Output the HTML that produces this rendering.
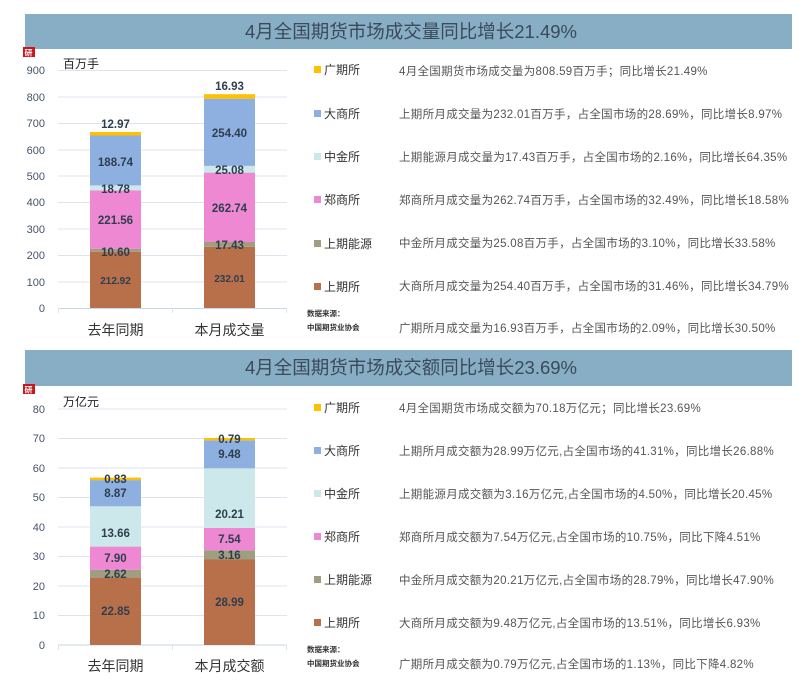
<!DOCTYPE html>
<html><head><meta charset="utf-8"><style>
body{margin:0;background:#fff;width:811px;height:681px;overflow:hidden}
svg text{font-family:"Liberation Sans","Noto Sans CJK SC",sans-serif}
.ax{font-size:11px;fill:#44546a}
.lb{font-size:11.5px;font-weight:bold;fill:#2f3e4e;text-anchor:middle}
.lg{font-size:12px;fill:#333}
.ds{font-size:11.5px;fill:#555;letter-spacing:0.3px}
.src{font-size:7.5px;fill:#333;font-weight:bold}
.t{font-size:18.5px;fill:#3b4a5a;text-anchor:middle}
.xl{font-size:14px;fill:#333;text-anchor:middle}
.un{font-size:12px;fill:#222}
</style></head><body>
<svg width="811" height="681" xmlns="http://www.w3.org/2000/svg">
<rect x="25" y="14" width="767" height="35" fill="#88aec6"/>
<text class="t" x="411" y="38">4月全国期货市场成交量同比增长21.49%</text>
<rect x="23" y="47" width="12" height="10" fill="#c8161d"/><text x="24.5" y="55.5" style="font-size:8px;fill:#fff;font-weight:bold">研</text>
<text class="un" x="63" y="68">百万手</text>
<g stroke="#dce4f0" stroke-width="1">
<line x1="58" x2="287" y1="70.5" y2="70.5"/><line x1="58" x2="287" y1="97" y2="97"/><line x1="58" x2="287" y1="123.5" y2="123.5"/><line x1="58" x2="287" y1="150" y2="150"/><line x1="58" x2="287" y1="176" y2="176"/><line x1="58" x2="287" y1="202.5" y2="202.5"/><line x1="58" x2="287" y1="229" y2="229"/><line x1="58" x2="287" y1="255.5" y2="255.5"/><line x1="58" x2="287" y1="282" y2="282"/>
<line x1="58" x2="287" y1="308.5" y2="308.5" stroke="#c9d6ea"/>
<line x1="58.5" x2="58.5" y1="308" y2="313"/><line x1="172.5" x2="172.5" y1="308" y2="313"/><line x1="286.5" x2="286.5" y1="308" y2="313"/>
</g>
<g class="ax" text-anchor="end">
<text x="45" y="74">900</text><text x="45" y="101">800</text><text x="45" y="127">700</text><text x="45" y="154">600</text><text x="45" y="180">500</text><text x="45" y="206">400</text><text x="45" y="233">300</text><text x="45" y="259">200</text><text x="45" y="286">100</text><text x="45" y="312">0</text>
</g>
<rect x="90" y="251.7" width="51" height="56.3" fill="#b8704b"/>
<rect x="90" y="248.9" width="51" height="2.8" fill="#a09e80"/>
<rect x="90" y="190.3" width="51" height="58.6" fill="#ee88d2"/>
<rect x="90" y="185.4" width="51" height="4.9" fill="#cce8ea"/>
<rect x="90" y="135.5" width="51" height="49.9" fill="#8db0e0"/>
<rect x="90" y="132" width="51" height="3.5" fill="#ffc000"/>
<text class="lb" x="115.5" y="284" style="font-size:10px">212.92</text>
<text class="lb" x="115.5" y="256">10.60</text>
<text class="lb" x="115.5" y="224">221.56</text>
<text class="lb" x="115.5" y="193">18.78</text>
<text class="lb" x="115.5" y="166">188.74</text>
<text class="lb" x="115.5" y="128">12.97</text>
<rect x="204" y="246.7" width="51" height="61.3" fill="#b8704b"/>
<rect x="204" y="242" width="51" height="4.7" fill="#a09e80"/>
<rect x="204" y="172.6" width="51" height="69.4" fill="#ee88d2"/>
<rect x="204" y="165.9" width="51" height="6.7" fill="#cce8ea"/>
<rect x="204" y="98.7" width="51" height="67.2" fill="#8db0e0"/>
<rect x="204" y="94.2" width="51" height="4.5" fill="#ffc000"/>
<text class="lb" x="229.5" y="282" style="font-size:10px">232.01</text>
<text class="lb" x="229.5" y="249">17.43</text>
<text class="lb" x="229.5" y="212">262.74</text>
<text class="lb" x="229.5" y="174">25.08</text>
<text class="lb" x="229.5" y="137">254.40</text>
<text class="lb" x="229.5" y="90">16.93</text>
<text class="xl" x="115.5" y="335">去年同期</text><text class="xl" x="229.5" y="335">本月成交量</text>
<rect x="314" y="66" width="7" height="7" fill="#ffc000"/><text class="lg" x="324" y="74">广期所</text>
<rect x="314" y="110" width="7" height="7" fill="#8db0e0"/><text class="lg" x="324" y="118">大商所</text>
<rect x="314" y="153" width="7" height="7" fill="#cce8ea"/><text class="lg" x="324" y="161">中金所</text>
<rect x="314" y="196" width="7" height="7" fill="#ee88d2"/><text class="lg" x="324" y="204">郑商所</text>
<rect x="314" y="240" width="7" height="7" fill="#a09e80"/><text class="lg" x="324" y="248">上期能源</text>
<rect x="314" y="283" width="7" height="7" fill="#b8704b"/><text class="lg" x="324" y="291">上期所</text>
<text class="src" x="307" y="316">数据来源：</text><text class="src" x="307" y="330">中国期货业协会</text>
<text class="ds" x="399" y="75">4月全国期货市场成交量为808.59百万手；同比增长21.49%</text>
<text class="ds" x="399" y="118">上期所月成交量为232.01百万手，占全国市场的28.69%，同比增长8.97%</text>
<text class="ds" x="399" y="161">上期能源月成交量为17.43百万手，占全国市场的2.16%，同比增长64.35%</text>
<text class="ds" x="399" y="204">郑商所月成交量为262.74百万手，占全国市场的32.49%，同比增长18.58%</text>
<text class="ds" x="399" y="247">中金所月成交量为25.08百万手，占全国市场的3.10%，同比增长33.58%</text>
<text class="ds" x="399" y="290">大商所月成交量为254.40百万手，占全国市场的31.46%，同比增长34.79%</text>
<text class="ds" x="399" y="332">广期所月成交量为16.93百万手，占全国市场的2.09%，同比增长30.50%</text>

<rect x="25" y="350" width="767" height="36" fill="#88aec6"/>
<text class="t" x="411" y="374">4月全国期货市场成交额同比增长23.69%</text>
<rect x="23" y="384" width="12" height="10" fill="#c8161d"/><text x="24.5" y="392.5" style="font-size:8px;fill:#fff;font-weight:bold">研</text>
<text class="un" x="63" y="406">万亿元</text>
<g stroke="#dce4f0" stroke-width="1">
<line x1="58" x2="287" y1="409" y2="409"/><line x1="58" x2="287" y1="438.5" y2="438.5"/><line x1="58" x2="287" y1="468" y2="468"/><line x1="58" x2="287" y1="497.5" y2="497.5"/><line x1="58" x2="287" y1="527" y2="527"/><line x1="58" x2="287" y1="556.5" y2="556.5"/><line x1="58" x2="287" y1="586" y2="586"/><line x1="58" x2="287" y1="615.5" y2="615.5"/>
<line x1="58" x2="287" y1="645" y2="645" stroke="#c9d6ea"/>
<line x1="58.5" x2="58.5" y1="645" y2="650"/><line x1="172.5" x2="172.5" y1="645" y2="650"/><line x1="286.5" x2="286.5" y1="645" y2="650"/>
</g>
<g class="ax" text-anchor="end">
<text x="45" y="413">80</text><text x="45" y="442">70</text><text x="45" y="472">60</text><text x="45" y="501">50</text><text x="45" y="531">40</text><text x="45" y="560">30</text><text x="45" y="590">20</text><text x="45" y="619">10</text><text x="45" y="649">0</text>
</g>
<rect x="90" y="577.6" width="51" height="67.4" fill="#b8704b"/>
<rect x="90" y="569.9" width="51" height="7.7" fill="#a09e80"/>
<rect x="90" y="546.6" width="51" height="23.3" fill="#ee88d2"/>
<rect x="90" y="506.3" width="51" height="40.3" fill="#cce8ea"/>
<rect x="90" y="480.1" width="51" height="26.2" fill="#8db0e0"/>
<rect x="90" y="477.6" width="51" height="2.5" fill="#ffc000"/>
<text class="lb" x="115.5" y="615">22.85</text>
<text class="lb" x="115.5" y="578">2.62</text>
<text class="lb" x="115.5" y="562">7.90</text>
<text class="lb" x="115.5" y="537">13.66</text>
<text class="lb" x="115.5" y="497">8.87</text>
<text class="lb" x="115.5" y="483">0.83</text>
<rect x="204" y="559.5" width="51" height="85.5" fill="#b8704b"/>
<rect x="204" y="550.2" width="51" height="9.3" fill="#a09e80"/>
<rect x="204" y="527.9" width="51" height="22.3" fill="#ee88d2"/>
<rect x="204" y="468.3" width="51" height="59.6" fill="#cce8ea"/>
<rect x="204" y="440.3" width="51" height="28" fill="#8db0e0"/>
<rect x="204" y="438" width="51" height="2.3" fill="#ffc000"/>
<text class="lb" x="229.5" y="606">28.99</text>
<text class="lb" x="229.5" y="559">3.16</text>
<text class="lb" x="229.5" y="543">7.54</text>
<text class="lb" x="229.5" y="518">20.21</text>
<text class="lb" x="229.5" y="458">9.48</text>
<text class="lb" x="229.5" y="443">0.79</text>
<text class="xl" x="115.5" y="671">去年同期</text><text class="xl" x="229.5" y="671">本月成交额</text>
<rect x="314" y="404" width="7" height="7" fill="#ffc000"/><text class="lg" x="324" y="412">广期所</text>
<rect x="314" y="447" width="7" height="7" fill="#8db0e0"/><text class="lg" x="324" y="455">大商所</text>
<rect x="314" y="490" width="7" height="7" fill="#cce8ea"/><text class="lg" x="324" y="498">中金所</text>
<rect x="314" y="533" width="7" height="7" fill="#ee88d2"/><text class="lg" x="324" y="541">郑商所</text>
<rect x="314" y="576" width="7" height="7" fill="#a09e80"/><text class="lg" x="324" y="584">上期能源</text>
<rect x="314" y="619" width="7" height="7" fill="#b8704b"/><text class="lg" x="324" y="627">上期所</text>
<text class="src" x="307" y="652">数据来源：</text><text class="src" x="307" y="666">中国期货业协会</text>
<text class="ds" x="399" y="412">4月全国期货市场成交额为70.18万亿元；同比增长23.69%</text>
<text class="ds" x="399" y="455">上期所月成交额为28.99万亿元,占全国市场的41.31%，同比增长26.88%</text>
<text class="ds" x="399" y="498">上期能源月成交额为3.16万亿元,占全国市场的4.50%，同比增长20.45%</text>
<text class="ds" x="399" y="541">郑商所月成交额为7.54万亿元,占全国市场的10.75%，同比下降4.51%</text>
<text class="ds" x="399" y="584">中金所月成交额为20.21万亿元,占全国市场的28.79%，同比增长47.90%</text>
<text class="ds" x="399" y="627">大商所月成交额为9.48万亿元,占全国市场的13.51%，同比增长6.93%</text>
<text class="ds" x="399" y="668">广期所月成交额为0.79万亿元,占全国市场的1.13%，同比下降4.82%</text>
</svg>
</body></html>
